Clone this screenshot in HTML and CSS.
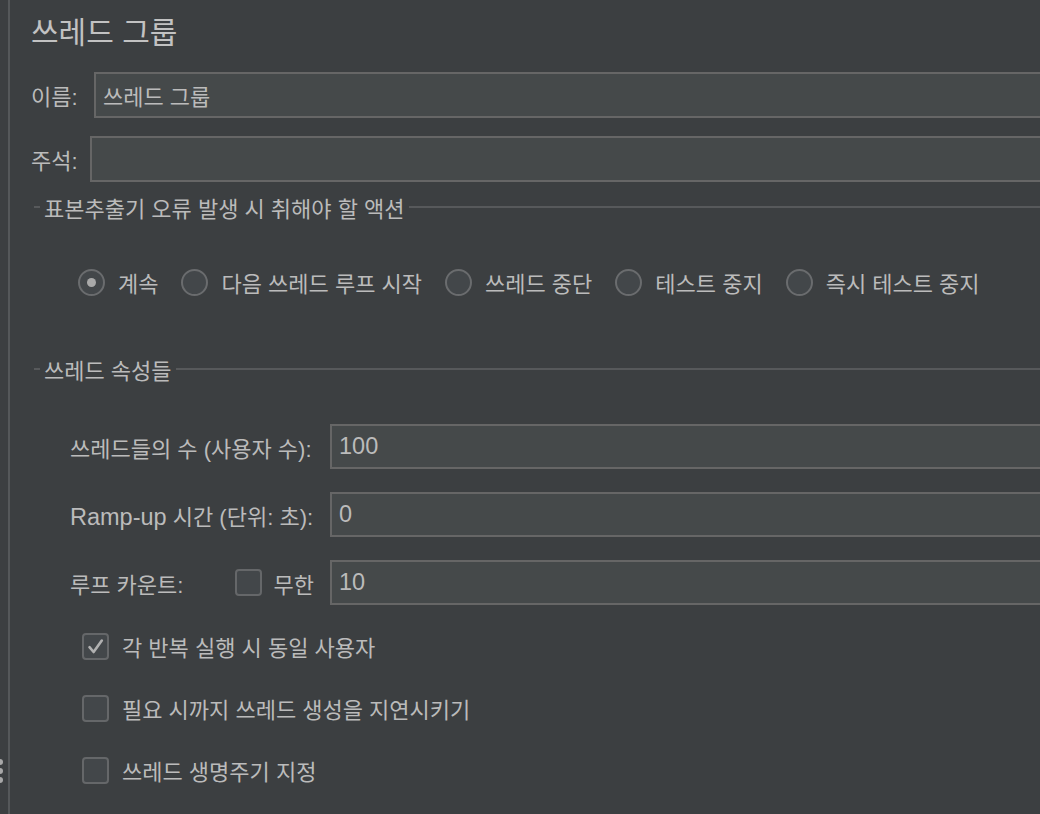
FILE: index.html
```html
<!DOCTYPE html>
<html lang="ko">
<head>
<meta charset="utf-8">
<title>쓰레드 그룹</title>
<link rel="stylesheet" href="styles.css">
</head>
<body>
<div class="app">
  <div class="gutter">
    <div class="grip"><span></span><span></span><span></span></div>
  </div>
  <div class="panel">
    <h1 class="title">쓰레드 그룹</h1>

    <div class="field-row">
      <span class="label name-label">이름:</span>
      <div class="textbox">쓰레드 그룹</div>
    </div>
    <div class="field-row comment-row">
      <span class="label comment-label">주석:</span>
      <div class="textbox"></div>
    </div>

    <div class="section-head first"><span class="section-title">표본추출기 오류 발생 시 취해야 할 액션</span></div>

    <div class="radio-row">
      <div class="radio-item"><span class="radio checked"></span><span>계속</span></div>
      <div class="radio-item"><span class="radio"></span><span>다음 쓰레드 루프 시작</span></div>
      <div class="radio-item"><span class="radio"></span><span>쓰레드 중단</span></div>
      <div class="radio-item"><span class="radio"></span><span>테스트 중지</span></div>
      <div class="radio-item"><span class="radio"></span><span>즉시 테스트 중지</span></div>
    </div>

    <div class="section-head second"><span class="section-title">쓰레드 속성들</span></div>

    <div class="props">
      <span class="label">쓰레드들의 수 (사용자 수):</span>
      <div class="textbox number">100</div>
      <span class="label"><span class="latin">Ramp-up</span> 시간 (단위: 초):</span>
      <div class="textbox number">0</div>
      <div class="label loop-label">
        <span>루프 카운트:</span>
        <span class="inline-check"><span class="checkbox"></span><span>무한</span></span>
      </div>
      <div class="textbox number">10</div>
    </div>

    <div class="checks">
      <div class="check-item">
        <span class="checkbox">
          <svg viewBox="0 0 27 27" width="27" height="27"><path d="M7.5 14.2 L11.6 19 L19.8 7.6" fill="none" stroke="#b0b0b0" stroke-width="2.6" stroke-linecap="round" stroke-linejoin="round"/></svg>
        </span>
        <span>각 반복 실행 시 동일 사용자</span>
      </div>
      <div class="check-item"><span class="checkbox"></span><span>필요 시까지 쓰레드 생성을 지연시키기</span></div>
      <div class="check-item"><span class="checkbox"></span><span>쓰레드 생명주기 지정</span></div>
    </div>
  </div>
</div>
</body>
</html>
```

FILE: styles.css
```css
html, body {
  margin: 0;
  padding: 0;
  height: 100%;
  overflow: hidden;
  background: #3c3f41;
}

body {
  font-family: "Liberation Sans", "Noto Sans CJK KR", sans-serif;
  font-size: 22px;
  color: #bbbbbb;
}

.app {
  display: flex;
  height: 814px;
  width: 1070px;
}

.gutter {
  width: 8px;
  flex: none;
  display: flex;
  flex-direction: column;
  justify-content: flex-end;
  padding-bottom: 31px;
  box-sizing: border-box;
}

.grip {
  display: flex;
  flex-direction: column;
  gap: 3px;
  margin-left: -3px;
}

.grip span {
  width: 6px;
  height: 6px;
  border-radius: 50%;
  background: #a8a8a8;
}

.panel {
  flex: 1;
  border-left: 2px solid #55585a;
  padding-left: 21px;
  display: flex;
  flex-direction: column;
}

.title {
  margin: 0;
  padding-top: 13px;
  font-size: 30px;
  font-weight: normal;
  line-height: 40px;
  color: #c2c2c2;
}

.field-row {
  display: flex;
  align-items: center;
  margin-top: 19px;
  height: 46px;
}

.comment-row {
  margin-top: 18px;
}

.label {
  white-space: nowrap;
}

.latin {
  font-size: 23.5px;
}

.name-label {
  width: 63px;
  flex: none;
}

.comment-label {
  width: 59px;
  flex: none;
}

.textbox {
  flex: 1;
  height: 46px;
  box-sizing: border-box;
  border: 2px solid #666666;
  background: #45494a;
  padding-left: 7px;
  display: flex;
  align-items: center;
  color: #bbbbbb;
}

.textbox.number {
  font-size: 23.5px;
}

.section-head {
  display: flex;
  align-items: center;
  height: 30px;
  gap: 4px;
}

.section-head::before {
  content: "";
  width: 6px;
  height: 2px;
  margin-left: 3px;
  background: #57595b;
}

.section-head::after {
  content: "";
  flex: 1;
  height: 2px;
  background: #57595b;
}

.section-head.first {
  margin-top: 10px;
}

.section-head.second {
  margin-top: 57px;
}

.radio-row {
  display: flex;
  align-items: center;
  height: 30px;
  margin-top: 45px;
  padding-left: 47px;
  gap: 23px;
}

.radio-item {
  display: flex;
  align-items: center;
  gap: 13px;
}

.radio {
  width: 27px;
  height: 27px;
  box-sizing: border-box;
  border: 2px solid #6a6c6e;
  border-radius: 50%;
  background: #43474a;
  display: flex;
  align-items: center;
  justify-content: center;
}

.radio.checked::after {
  content: "";
  width: 9px;
  height: 9px;
  border-radius: 50%;
  background: #a9a9a9;
}

.props {
  display: grid;
  grid-template-columns: 244px 1fr;
  column-gap: 16px;
  row-gap: 23px;
  grid-auto-rows: 45px;
  align-items: center;
  margin-top: 40px;
  padding-left: 39px;
}

.props .textbox {
  height: 45px;
  padding-left: 7px;
}

.loop-label {
  display: flex;
  align-items: center;
  justify-content: space-between;
}

.inline-check {
  display: flex;
  align-items: center;
  gap: 12px;
}

.checkbox {
  width: 27px;
  height: 27px;
  box-sizing: border-box;
  border: 2px solid #656769;
  border-radius: 4px;
  background: #43474a;
  display: flex;
  align-items: center;
  justify-content: center;
  flex: none;
}

.checkbox svg {
  display: block;
  margin: -2px;
}

.checks {
  display: flex;
  flex-direction: column;
  gap: 32px;
  margin-top: 26px;
  padding-left: 51px;
}

.check-item {
  display: flex;
  align-items: center;
  height: 30px;
  gap: 13px;
}
```
